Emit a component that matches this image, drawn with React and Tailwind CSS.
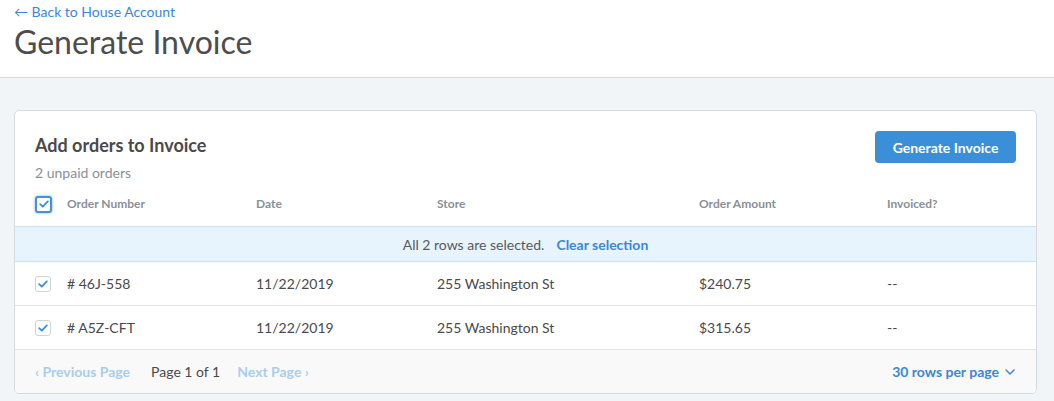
import { ChevronDown } from 'lucide-react'

const orders = [
  { id: '# 46J-558', date: '11/22/2019', store: '255 Washington St', amount: '$240.75', invoiced: '--' },
  { id: '# A5Z-CFT', date: '11/22/2019', store: '255 Washington St', amount: '$315.65', invoiced: '--' },
]

function Check({ focused }) {
  return (
    <span
      className={
        focused
          ? 'flex h-[17px] w-[17px] items-center justify-center rounded-[3px] border-2 border-[#4a90d9] bg-white shadow-[0_0_3px_rgba(74,144,217,0.7)]'
          : 'flex h-4 w-4 items-center justify-center rounded-[3px] border border-[#cfd4d9] bg-white'
      }
    >
      <svg width="10" height="8" viewBox="0 0 10 8" fill="none">
        <path d="M1.2 4.2 L3.8 6.6 L8.8 1.4" stroke="#3b8fd9" strokeWidth="1.8" strokeLinecap="round" strokeLinejoin="round" />
      </svg>
    </span>
  )
}

export default function App() {
  return (
    <div className="min-h-[401px] bg-[#f2f5f7] font-['Lato',sans-serif]">
      <div className="border-b border-[#d5d9dd] bg-white px-[14px] pt-[3px] pb-[16px]">
        <a className="block text-[14px] leading-[17px] text-[#3b87d6]">&larr; Back to House Account</a>
        <h1 className="mt-[3px] text-[32px] leading-[38px] text-[#4d4d4d]">Generate Invoice</h1>
      </div>

      <div className="pl-[14px] pr-[17px] pt-[32px] pb-2">
        <div className="overflow-hidden rounded-[5px] border border-[#d6dade] bg-white">
          <div className="flex items-start justify-between px-5 pt-5">
            <div>
              <h2 className="pt-[2px] text-[18px] font-bold leading-6 text-[#4a4a4a]">Add orders to Invoice</h2>
              <p className="mt-[8px] text-[14px] leading-4 text-[#8a9096]">2 unpaid orders</p>
            </div>
            <button className="h-8 w-[141px] rounded-[4px] bg-[#3b8fd9] text-[14px] font-bold text-white">
              Generate Invoice
            </button>
          </div>

          <div className="mt-[1px] flex h-[44px] items-center px-5 text-[12px] font-bold text-[#8a9096]">
            <div className="w-8"><Check focused /></div>
            <div className="w-[189px]">Order Number</div>
            <div className="w-[181px]">Date</div>
            <div className="w-[262px]">Store</div>
            <div className="w-[188px]">Order Amount</div>
            <div>Invoiced?</div>
          </div>

          <div className="flex h-[36px] items-center justify-center border-y border-[#c9e2f5] bg-[#e8f4fd] text-[14px] text-[#555a60]">
            All 2 rows are selected.
            <span className="ml-[12px] font-bold text-[#3b87d6]">Clear selection</span>
          </div>

          {orders.map((o) => (
            <div key={o.id} className="flex h-[44px] items-center border-b border-[#e2e5e8] px-5 text-[14px] text-[#4a4a4a]">
              <div className="w-8"><Check /></div>
              <div className="w-[189px]">{o.id}</div>
              <div className="w-[181px]">{o.date}</div>
              <div className="w-[262px]">{o.store}</div>
              <div className="w-[188px]">{o.amount}</div>
              <div>{o.invoiced}</div>
            </div>
          ))}

          <div className="flex h-[43px] items-center justify-between bg-[#f9f9f9] px-5 text-[14px]">
            <div className="flex items-center">
              <span className="font-bold text-[#a9cdee]">&lsaquo; Previous Page</span>
              <span className="ml-[21px] text-[#4a4a4a]">Page 1 of 1</span>
              <span className="ml-[17px] font-bold text-[#a9cdee]">Next Page &rsaquo;</span>
            </div>
            <div className="mr-[-2px] flex items-center font-bold text-[#3b87d6]">
              30 rows per page
              <ChevronDown size={16} strokeWidth={2.2} className="ml-[3px]" />
            </div>
          </div>
        </div>
      </div>
    </div>
  )
}
